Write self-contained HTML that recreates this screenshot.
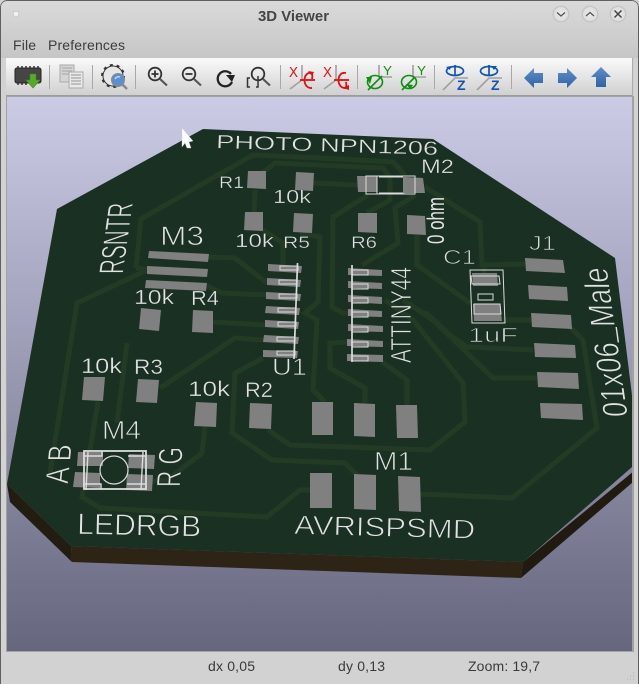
<!DOCTYPE html>
<html><head><meta charset="utf-8"><title>3D Viewer</title>
<style>
html,body{margin:0;padding:0;background:#d2d2d2;width:639px;height:684px;overflow:hidden}
svg{display:block;font-family:"Liberation Sans",sans-serif}
.b text{fill:#e2e2e2;stroke:#1a3023;stroke-width:.35}
.b text.h{stroke-width:.8}
.p polygon{fill:#808080}
.t path{fill:none;stroke:#233b24;stroke-width:5;stroke-linejoin:miter}
.w{fill:none;stroke:#dcdcdc;stroke-width:1}
.sep{stroke:#a8a8a8;stroke-width:1}
.ax{stroke:#a0a0a0;stroke-width:1.6;fill:none}
</style></head><body>
<svg width="639" height="684" viewBox="0 0 639 684" xmlns="http://www.w3.org/2000/svg">
<defs>
<linearGradient id="tb" x1="0" y1="0" x2="0" y2="1"><stop offset="0" stop-color="#dadada"/><stop offset="1" stop-color="#c6c6c6"/></linearGradient>
<linearGradient id="tool" x1="0" y1="0" x2="0" y2="1"><stop offset="0" stop-color="#fafafa"/><stop offset="1" stop-color="#cfcfcf"/></linearGradient>
<linearGradient id="bg" x1="0" y1="0" x2="0" y2="1"><stop offset="0" stop-color="#cbcbe6"/><stop offset="1" stop-color="#66667e"/></linearGradient>
<linearGradient id="ar" x1="0" y1="0" x2="0" y2="1"><stop offset="0" stop-color="#5f8fc8"/><stop offset="1" stop-color="#2f62a6"/></linearGradient>
<radialGradient id="btn"><stop offset="0" stop-color="#ececec"/><stop offset=".8" stop-color="#dedede"/><stop offset="1" stop-color="#b5b5b5"/></radialGradient>
</defs>

<!-- frame -->
<rect x="0.5" y="0.5" width="638" height="690" rx="7" fill="#d2d2d2" stroke="#606060"/>
<path d="M1 8Q1 1 8 1H631Q638 1 638 8V58H1Z" fill="url(#tb)"/>
<rect x="1" y="58" width="637" height="625" fill="#d2d2d2"/>
<circle cx="16" cy="14" r="3" fill="#f0f0f0" stroke="#bdbdbd" stroke-width=".7"/>
<text x="258" y="21" font-size="15" font-weight="bold" fill="#454545" textLength="71" lengthAdjust="spacingAndGlyphs">3D Viewer</text>
<circle cx="561" cy="14" r="8.3" fill="url(#btn)"/><path d="M557 12.5l4 3.5 4-3.5" fill="none" stroke="#555" stroke-width="1.3"/>
<circle cx="590" cy="14" r="8.3" fill="url(#btn)"/><path d="M586 16l4-3.5 4 3.5" fill="none" stroke="#555" stroke-width="1.3"/>
<circle cx="618" cy="14" r="8.3" fill="url(#btn)"/><path d="M614.500 10.500l7 7m0-7l-7 7" fill="none" stroke="#444" stroke-width="1.5"/>
<text x="13" y="50" font-size="14" fill="#3c3c3c" textLength="23">File</text>
<text x="48" y="50" font-size="14" fill="#3c3c3c" textLength="77">Preferences</text>

<!-- toolbar -->
<rect x="6" y="58" width="626" height="38" fill="url(#tool)"/>
<rect x="6" y="95" width="627" height="2" fill="#9c9c9c"/>
<rect x="632" y="58" width="1" height="38" fill="#aaa"/>
<path class="sep" d="M49.500 65v24M92.500 65v24M135.500 65v24M280.500 65v24M357.500 65v24M434.500 65v24M511.500 65v24"/>
<!-- chip -->
<rect x="15" y="68" width="26" height="15" rx="2" fill="#454545" stroke="#222"/>
<path d="M18 66v2M22 66v2M26 66v2M30 66v2M34 66v2M38 66v2M18 83v2M22 83v2M26 83v2" stroke="#333" stroke-width="1.500"/>
<path d="M30 74h6v6h4l-7 8-7-8h4z" fill="#5aa82a" stroke="#3f8a1c" stroke-width=".6"/>
<!-- pages -->
<rect x="60" y="65" width="14" height="17" fill="#d4d4d4" stroke="#aaa"/>
<path d="M62 68h10M62 71h10M62 74h10" stroke="#b4b4b4" stroke-width="1.500"/>
<rect x="69" y="72" width="14" height="16" fill="#e8e8e8" stroke="#aaa"/>
<path d="M71 75h10M71 78h10M71 81h10M71 84h10" stroke="#b0b0b0" stroke-width="1.500"/>
<!-- gear -->
<circle cx="113" cy="76" r="10" fill="#e6e6e6" stroke="#333" stroke-width="1"/>
<circle cx="113" cy="76" r="11" fill="none" stroke="#333" stroke-width="2" stroke-dasharray="3 3.900"/>
<circle cx="118" cy="80" r="6.500" fill="#5b8fd0" stroke="#8a8a8a"/>
<path d="M115 79a4 4 0 0 1 5-2" fill="none" stroke="#bcd4ee" stroke-width="1.500"/>
<path d="M122 84l5 5" stroke="#888" stroke-width="2.500"/>
<!-- zoom icons -->
<g fill="none" stroke="#333">
<circle cx="155" cy="74" r="6.300" stroke-width="1.800"/><path d="M160 79l7 6.500" stroke-width="2.200" stroke="#555"/><path d="M151.500 74h7M155 70.500v7" stroke-width="1.800"/>
<circle cx="189" cy="74" r="6.300" stroke-width="1.800"/><path d="M194 79l7 6.500" stroke-width="2.200" stroke="#555"/><path d="M185.500 74h7" stroke-width="1.800"/>
<path d="M231 74a7.500 7.500 0 1 0 1 8" stroke="#222" stroke-width="2.300"/>
<circle cx="258" cy="74" r="6.300" stroke-width="1.800"/><path d="M263 79l7 6.500" stroke-width="2.200" stroke="#555"/><path d="M250 78h-2.500v9h2.500M258 76v11h-2" stroke-width="1.500"/>
</g>
<path d="M226 75h9l-3 7z" fill="#222"/>
<!-- X rotate -->
<g class="ax"><path d="M302 65v15M302 80l-12 9"/><path d="M336 65v15M336 80l-12 9"/></g>
<g font-size="15" fill="#e01010"><text x="289" y="77" textLength="9" lengthAdjust="spacingAndGlyphs">X</text><text x="323" y="77" textLength="9" lengthAdjust="spacingAndGlyphs">X</text></g>
<g fill="none" stroke="#e01010" stroke-width="1.800">
<path d="M312 73C302 71 302 89 312 88"/><path d="M300 80h15"/><path d="M346 73C336 71 336 89 346 88"/><path d="M334 80h15"/>
<path d="M312 73a5 8 0 0 1 0 6"/><path d="M346 88a5 8 0 0 0 0-6"/>
</g>
<path d="M308 71l6 1-2 4zM343 88l6-3 0 5z" fill="#e01010"/>
<!-- Y rotate -->
<g class="ax"><path d="M379 65v12h13"/><path d="M413 65v12h13"/></g>
<g font-size="13" fill="#109010"><text x="383" y="75" textLength="9" lengthAdjust="spacingAndGlyphs">Y</text><text x="417" y="75" textLength="9" lengthAdjust="spacingAndGlyphs">Y</text></g>
<g fill="none" stroke="#109010" stroke-width="1.600">
<ellipse cx="375" cy="82" rx="7.500" ry="6.500"/><path d="M368 90l14-14"/><ellipse cx="409" cy="82" rx="7.500" ry="6.500"/><path d="M402 90l13-13"/>
</g>
<path d="M366 77h6l-2 7zM406 84l7 1-3 4z" fill="#109010"/>
<!-- Z rotate -->
<g class="ax"><path d="M468 78h-13l-12 12"/><path d="M502 78h-13l-12 12"/></g>
<g fill="none" stroke="#1055b0" stroke-width="1.700"><ellipse cx="455" cy="71" rx="8.500" ry="4.500"/><path d="M455 65v10"/><ellipse cx="489" cy="71" rx="8.500" ry="4.500"/><path d="M489 65v10"/></g>
<path d="M446 67l5-1-1 4zM497 66l-6 0 3 4z" fill="#1055b0"/>
<g font-size="14" font-weight="bold" fill="#1055b0"><text x="457" y="90">Z</text><text x="491" y="90">Z</text></g>
<!-- arrows -->
<path d="M524 78l10-10v5h9v10h-9v5z" fill="url(#ar)"/>
<path d="M577 78l-10-10v5h-9v10h9v5z" fill="url(#ar)"/>
<path d="M601 67l10 10h-5v10h-10v-10h-5z" fill="url(#ar)"/>

<!-- viewport -->
<rect x="6" y="96" width="628" height="556" fill="#a2a2a2"/>
<rect x="7" y="97" width="625" height="554" fill="url(#bg)"/>

<svg x="7" y="97" width="625" height="554" viewBox="7 97 625 554" overflow="hidden">
<polygon points="7,484 71,546 72,562 10,502" fill="#231c11"/>
<polygon points="71,546 523,562 521,578 72,562" fill="#2d2416"/>
<polygon points="523,562 640,466 640,476 521,578" fill="#211a10"/>
<polygon points="57,209 203,129 433,139 615,258 640,460 523,562 71,546 7,484" fill="#1a3023"/>

<g class="t">
<path d="M136 268L141 219L253 155L320 158L393 162L405 175"/>
<path d="M260 175L275 163L383 168L390 178L390 200L367 213"/>
<path d="M313 183L358 185"/>
<path d="M368 195L333 217L332 307L343 313L352 313"/>
<path d="M415 195L395 208L398 243L362 265"/>
<path d="M425 187L480 222L482 265L525 264"/>
<path d="M484 263L484 275"/>
<path d="M417 235L417 265L470 303"/>
<path d="M503 320L531 320"/>
<path d="M300 233L320 237L318 302L305 313L317 320L313 390L325 402"/>
<path d="M263 230L283 243L283 265"/>
<path d="M348 342L330 343L330 368L365 388L365 403"/>
<path d="M382 362L407 380L407 405"/>
<path d="M385 300L413 320L463 383L465 422L430 450L290 445L268 430"/>
<path d="M263 358L235 373L232 433L272 460L345 463L357 475"/>
<path d="M420 494L512 498L597 428L583 340L571 328"/>
<path d="M310 490L300 490L267 517L100 508L82 497L98 402"/>
<path d="M537 378L493 378L433 320L403 300"/>
<path d="M533 350L467 347L450 335L425 312"/>
<path d="M136 268L147 270L77 303L50 473"/>
<path d="M127 343L117 423"/>
<path d="M160 388L235 338L263 340"/>
<path d="M205 427L202 453L167 480L152 481"/>
<path d="M208 257L235 258L267 283"/>
<path d="M207 286L222 293L267 295"/>
<path d="M213 322L265 325"/>
<path d="M255 190L254 212"/>
</g>

<g class="p">
<polygon points="248,171 266,171 266,189 247,188"/>
<polygon points="296,172 314,173 313,191 295,190"/>
<polygon points="245,212 263,212 263,231 244,230"/>
<polygon points="294,213 313,214 312,233 293,232"/>
<polygon points="149,251 209,254 208,262 148,258"/>
<polygon points="147,266 208,269 207,277 147,274"/>
<polygon points="146,280 207,283 206,291 145,288"/>
<polygon points="141,308 161,310 159,331 139,329"/>
<polygon points="193,310 213,311 213,333 192,332"/>
<polygon points="268,264 302,266 301,273 268,271"/>
<polygon points="267,278 301,280 300,287 267,285"/>
<polygon points="266,292 301,294 300,301 266,299"/>
<polygon points="266,306 300,308 299,315 265,313"/>
<polygon points="265,320 299,322 298,329 265,327"/>
<polygon points="264,335 299,337 298,344 263,342"/>
<polygon points="263,350 298,351 297,358 263,357"/>
<polygon points="348,268 382,270 382,276 348,275"/>
<polygon points="348,281 382,283 382,289 348,288"/>
<polygon points="348,295 382,297 382,304 348,302"/>
<polygon points="348,309 382,311 382,317 348,316"/>
<polygon points="348,324 383,326 383,332 348,331"/>
<polygon points="347,339 383,341 383,347 347,346"/>
<polygon points="347,354 383,355 383,362 347,361"/>
<polygon points="357,176 377,176 377,192 358,192"/>
<polygon points="405,177 423,178 425,193 405,193"/>
<polygon points="358,213 377,213 377,233 358,232"/>
<polygon points="407,215 425,216 426,235 407,234"/>
<polygon points="525,258 563,260 565,273 526,271"/>
<polygon points="528,285 567,287 568,301 529,299"/>
<polygon points="531,313 571,315 572,329 532,327"/>
<polygon points="534,343 575,345 576,358 535,357"/>
<polygon points="537,372 578,373 579,389 538,387"/>
<polygon points="540,403 582,404 583,420 541,418"/>
<polygon points="472,273 497,273 498,286 473,286"/>
<polygon points="473,304 500,304 502,321 474,321"/>
<polygon points="312,402 333,402 333,435 312,435"/>
<polygon points="354,403 375,404 375,437 354,436"/>
<polygon points="396,405 417,405 418,438 397,438"/>
<polygon points="310,473 332,473 332,508 310,508"/>
<polygon points="354,474 376,475 376,510 354,509"/>
<polygon points="398,476 420,477 421,512 399,511"/>
<polygon points="84,377 105,377 103,401 82,400"/>
<polygon points="138,379 159,380 157,403 136,402"/>
<polygon points="196,402 217,403 216,427 194,426"/>
<polygon points="250,403 272,404 271,429 249,428"/>
<polygon points="78,452 103,452 103,466 77,466"/>
<polygon points="129,454 155,455 154,469 128,468"/>
<polygon points="75,472 100,473 100,488 73,487"/>
<polygon points="127,474 153,475 152,491 126,490"/>
</g>

<path class="w" d="M366 176h49v18h-49zM377 176v18M404 177v17M379 177h24M379 193h24"/>
<path class="w" d="M470 270h33l2 53h-33zM471 276h28l1 8h-28zM474 304h26l1 10h-27zM478 294h15v6h-15z"/>
<g class="w" stroke-width="1.200">
<rect x="280" y="266" width="18" height="4"/><rect x="279" y="280" width="18" height="4"/><rect x="279" y="294" width="18" height="4"/><rect x="278" y="308" width="18" height="4"/><rect x="278" y="322" width="18" height="4"/><rect x="277" y="337" width="18" height="4"/><rect x="277" y="351" width="18" height="4"/>
<rect x="352" y="270" width="16" height="5"/><rect x="352" y="284" width="16" height="5"/><rect x="352" y="298" width="16" height="5"/><rect x="352" y="312" width="16" height="5"/><rect x="352" y="327" width="16" height="5"/><rect x="352" y="342" width="16" height="5"/><rect x="352" y="356" width="16" height="5"/>
</g>
<path d="M297.500 263L294 359M352 265V362" fill="none" stroke="#dcdcdc" stroke-width="1.700"/>
<g fill="none" stroke="#dcdcdc">
<rect x="84" y="451" width="62" height="38" stroke-width="1.800"/>
<path d="M88 452l-2 38M143 452l-2 38M84 456h18v-5M128 456h17M84 484h17v5M127 484h18" stroke-width="1.400"/>
<circle cx="114" cy="470" r="14" stroke-width="1.200"/>
</g>

<g class="b">
<text x="216" y="148" font-size="19" textLength="222" lengthAdjust="spacingAndGlyphs" transform="rotate(1.800 216 148)">PHOTO NPN1206</text>
<text x="421" y="173" font-size="19" textLength="33" lengthAdjust="spacingAndGlyphs">M2</text>
<text x="219" y="188" font-size="17" textLength="25" lengthAdjust="spacingAndGlyphs">R1</text>
<text x="273" y="203" font-size="18" textLength="38" lengthAdjust="spacingAndGlyphs">10k</text>
<text transform="matrix(0,-1,1,0,444,244)" font-size="24" textLength="47" lengthAdjust="spacingAndGlyphs" style="stroke:none">0 ohm</text>
<text x="235" y="247" font-size="18" textLength="39" lengthAdjust="spacingAndGlyphs">10k</text>
<text x="283" y="248" font-size="17" textLength="27" lengthAdjust="spacingAndGlyphs">R5</text>
<text x="351" y="248" font-size="17" textLength="26" lengthAdjust="spacingAndGlyphs">R6</text>
<text class="h" x="443" y="264" font-size="20" textLength="33" lengthAdjust="spacingAndGlyphs">C1</text>
<text class="h" x="529" y="250" font-size="20" textLength="27" lengthAdjust="spacingAndGlyphs">J1</text>
<text class="h" x="160" y="245" font-size="27" textLength="44" lengthAdjust="spacingAndGlyphs">M3</text>
<text class="h" transform="matrix(0.14,-0.99,1,0,123,274)" font-size="35" textLength="72" lengthAdjust="spacingAndGlyphs">RSNTR</text>
<text x="134" y="304" font-size="20" textLength="40" lengthAdjust="spacingAndGlyphs">10k</text>
<text x="191" y="305" font-size="20" textLength="28" lengthAdjust="spacingAndGlyphs">R4</text>
<text class="h" x="272" y="375" font-size="24" textLength="35" lengthAdjust="spacingAndGlyphs">U1</text>
<text class="h" transform="matrix(0,-1,1,0,411,363)" font-size="29" textLength="96" lengthAdjust="spacingAndGlyphs">ATTINY44</text>
<text class="h" x="468" y="342" font-size="20" textLength="50" lengthAdjust="spacingAndGlyphs">1uF</text>
<text class="h" transform="matrix(-0.14,-0.99,1,0,628,417)" font-size="35" textLength="151" lengthAdjust="spacingAndGlyphs">01x06<tspan dy="-5">_</tspan><tspan dy="5">Male</tspan></text>
<text x="81" y="373" font-size="21" textLength="41" lengthAdjust="spacingAndGlyphs">10k</text>
<text x="134" y="374" font-size="21" textLength="29" lengthAdjust="spacingAndGlyphs">R3</text>
<text x="188" y="396" font-size="21" textLength="42" lengthAdjust="spacingAndGlyphs">10k</text>
<text x="245" y="397" font-size="21" textLength="28" lengthAdjust="spacingAndGlyphs">R2</text>
<text class="h" x="102" y="439" font-size="26" textLength="39" lengthAdjust="spacingAndGlyphs">M4</text>
<text class="h" transform="matrix(0.1,-0.99,1,0,68,484)" font-size="33" textLength="40" lengthAdjust="spacingAndGlyphs">A B</text>
<text class="h" transform="matrix(0.07,-1,1,0,180,487)" font-size="34" textLength="40" lengthAdjust="spacingAndGlyphs">R G</text>
<text class="h" x="77" y="534" font-size="30" textLength="124" lengthAdjust="spacingAndGlyphs" transform="rotate(1.200 77 534)">LEDRGB</text>
<text class="h" x="294" y="534" font-size="27" textLength="181" lengthAdjust="spacingAndGlyphs" transform="rotate(1.500 294 534)">AVRISPSMD</text>
<text class="h" x="374" y="470" font-size="26" textLength="39" lengthAdjust="spacingAndGlyphs">M1</text>
</g>

<polygon points="182,128 193,141 189,142 191,148 187,148 185,143 182,147" fill="#fff" stroke="#ccc" stroke-width=".4"/>
</svg>

<!-- status bar -->
<g font-size="14" fill="#3a3a3a">
<text x="208" y="671" textLength="47">dx 0,05</text>
<text x="338" y="671" textLength="47">dy 0,13</text>
<text x="468" y="671" textLength="72">Zoom: 19,7</text>
</g>
<path d="M633 673h1M630 676h1M633 676h1M627 679h1M630 679h1M633 679h1" stroke="#b0b0b0"/>
</svg>
</body></html>
